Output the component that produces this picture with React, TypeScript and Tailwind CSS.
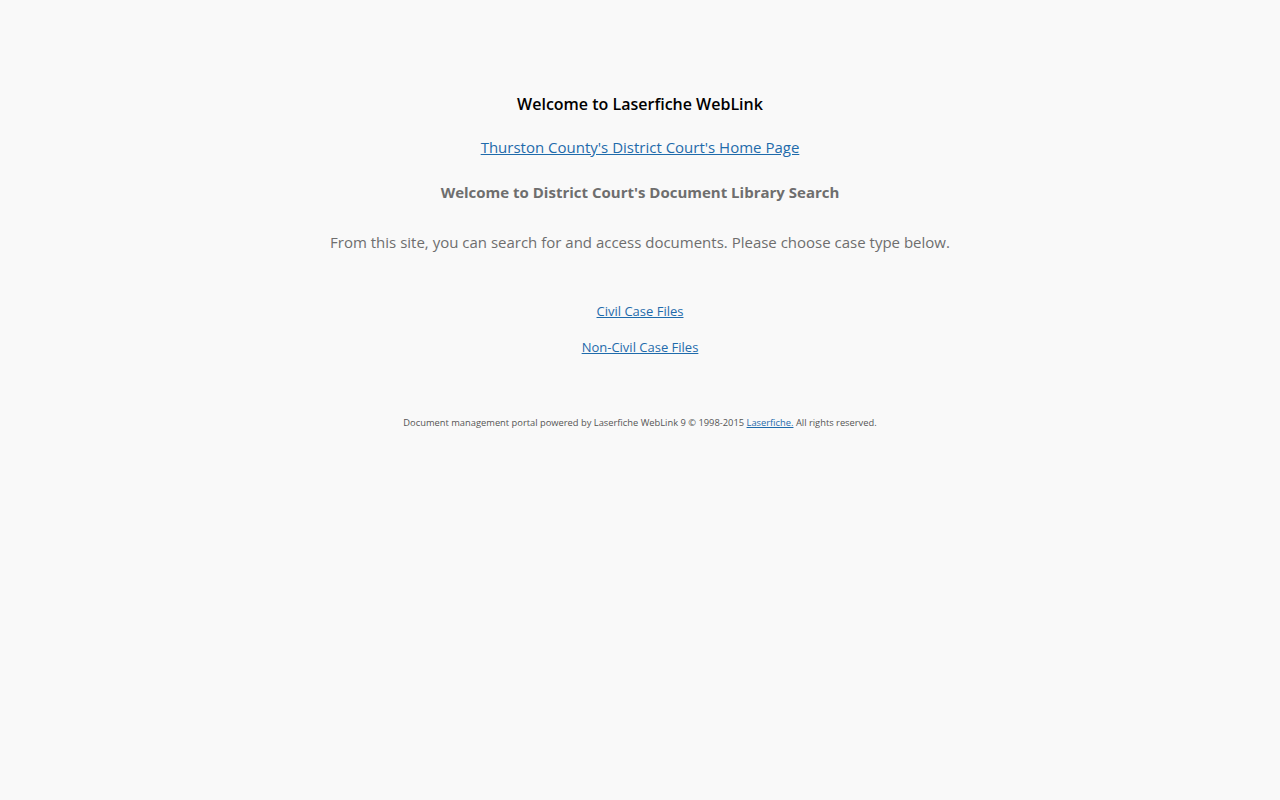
export default function App() {
  return (
    <div className="min-h-[800px] w-full bg-[#f9f9f9] font-['Open_Sans',sans-serif] text-center">
      <div className="flex flex-col items-center pt-[92px]">
        <h1 className="text-[16px] leading-[24px] font-semibold text-black">Welcome to Laserfiche WebLink</h1>
        <a href="#" className="mt-[19px] text-[15px] leading-[24px] text-[#1f6bab] underline">
          Thurston County's District Court's Home Page
        </a>
        <h2 className="mt-[21px] text-[15px] leading-[24px] font-bold text-[#6e6e6e]">
          Welcome to District Court's Document Library Search
        </h2>
        <p className="mt-[26px] text-[15px] leading-[24px] text-[#6e6e6e]">
          From this site, you can search for and access documents. Please choose case type below.
        </p>
        <a href="#" className="mt-[47px] text-[13px] leading-[20px] text-[#1f6bab] underline">
          Civil Case Files
        </a>
        <a href="#" className="mt-[16px] text-[13px] leading-[20px] text-[#1f6bab] underline">
          Non-Civil Case Files
        </a>
        <p className="mt-[59px] text-[9.33px] leading-[14px] text-[#555555]">
          Document management portal powered by Laserfiche WebLink 9 © 1998-2015{' '}
          <a href="#" className="text-[#1f6bab] underline">Laserfiche.</a> All rights reserved.
        </p>
      </div>
    </div>
  );
}
